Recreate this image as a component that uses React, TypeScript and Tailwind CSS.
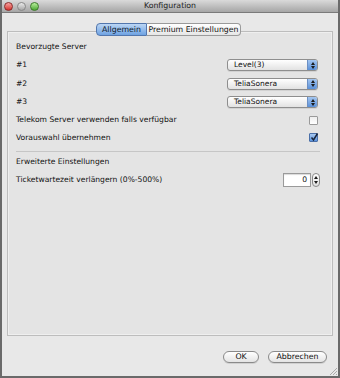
import React from 'react';

const font = { fontFamily: '"DejaVu Sans", "Liberation Sans", sans-serif' };

function Popup({ value }: { value: string }) {
  return (
    <div className="flex h-[12px] w-[91px] items-stretch overflow-hidden rounded-[3px] border border-[#8e8e8e] bg-gradient-to-b from-white to-[#e2e2e2] shadow-[0_1px_0_rgba(0,0,0,0.08)]">
      <div className="flex flex-1 items-center pl-[6px] text-[7.5px] leading-none text-[#111]">{value}</div>
      <div className="flex w-[10px] flex-col items-center justify-center gap-[1px] border-l border-[#6b8fc4] bg-gradient-to-b from-[#a4c6f0] to-[#5a90d8]">
        <svg width="4" height="3" viewBox="0 0 4 3"><path d="M0 3 L2 0 L4 3 Z" fill="#1b1b1b" /></svg>
        <svg width="4" height="3" viewBox="0 0 4 3"><path d="M0 0 L2 3 L4 0 Z" fill="#1b1b1b" /></svg>
      </div>
    </div>
  );
}

function Checkbox({ checked }: { checked?: boolean }) {
  if (checked) {
    return (
      <div className="relative h-[9px] w-[9px] rounded-[1px] border border-[#4a6fa8] bg-gradient-to-b from-[#a8c8f0] to-[#5a92dc]">
        <svg className="absolute left-[0px] top-[-2px]" width="9" height="10" viewBox="0 0 9 10">
          <path d="M1.5 5.5 L3.5 8 L7.5 1.5" stroke="#18243a" strokeWidth="1.5" fill="none" />
        </svg>
      </div>
    );
  }
  return <div className="h-[9px] w-[9px] rounded-[1px] border border-[#9a9a9a] bg-gradient-to-b from-[#eeeeee] to-white" />;
}

function Row({ h, children }: { h: string; children: React.ReactNode }) {
  return <div className={`flex items-center justify-between ${h}`}>{children}</div>;
}

export default function App() {
  return (
    <div
      style={font}
      className="flex h-[378px] w-[340px] flex-col overflow-hidden border-x-2 border-b-2 border-[#6a6a6a] bg-[#e8e8e8] text-[#111]"
    >
      {/* title bar */}
      <div className="relative flex h-[13px] shrink-0 items-center justify-center border-b border-[#7a7a7a] bg-gradient-to-b from-[#dadada] to-[#a6a6a6]">
        <div className="absolute left-[2px] top-[2px] flex gap-[4px]">
          <div className="h-[9px] w-[9px] rounded-full border border-[#8a2a2a] bg-gradient-to-b from-[#f7a0a0] to-[#d22a2a]" />
          <div className="h-[9px] w-[9px] rounded-full border border-[#888] bg-gradient-to-b from-[#eaeaea] to-[#a8a8a8]" />
          <div className="h-[9px] w-[9px] rounded-full border border-[#3c7a2a] bg-gradient-to-b from-[#b8f09c] to-[#4aa830]" />
        </div>
        <span className="text-[7.8px] leading-none text-[#222]">Konfiguration</span>
      </div>

      {/* tab box */}
      <div className="relative mx-[5px] mt-[18px] h-[305px] border border-[#bdbdbd] bg-[#e4e4e4] shadow-[inset_0_0_0_1px_#efefef]">
        <div className="absolute left-[88px] top-[-9px] flex h-[13px]">
          <div className="flex w-[51px] items-center justify-center rounded-l-[4px] border border-[#5276ad] bg-gradient-to-b from-[#bcd6f4] to-[#6ea2e2] text-[7.8px] leading-none text-[#0e1a2c]">
            Allgemein
          </div>
          <div className="flex w-[94px] items-center justify-center rounded-r-[4px] border border-l-0 border-[#9a9a9a] bg-gradient-to-b from-white to-[#e6e6e6] text-[7.8px] leading-none text-[#111]">
            Premium Einstellungen
          </div>
        </div>

        <div className="flex flex-col pl-[8px] pr-[14px] pt-[6px] text-[7.6px] leading-none">
          <Row h="h-[18px]"><span>Bevorzugte Server</span></Row>
          <Row h="h-[18px]"><span>#1</span><Popup value="Level(3)" /></Row>
          <Row h="h-[19px]"><span>#2</span><Popup value="TeliaSonera" /></Row>
          <Row h="h-[18px]"><span>#3</span><Popup value="TeliaSonera" /></Row>
          <Row h="h-[18px]">
            <span>Telekom Server verwenden falls verfügbar</span>
            <Checkbox />
          </Row>
          <Row h="h-[17px]">
            <span>Vorauswahl übernehmen</span>
            <Checkbox checked />
          </Row>
          <div className="mr-[-2px] mt-[5px] h-px bg-[#c6c6c6]" />
          <Row h="h-[20px]"><span>Erweiterte Einstellungen</span></Row>
          <Row h="h-[15px]">
            <span>Ticketwartezeit verlängern (0%-500%)</span>
            <div className="mr-[-2px] flex items-center gap-[1px]">
              <div className="flex h-[14px] w-[28px] items-center justify-end border border-[#9a9a9a] bg-white pr-[3px] shadow-[inset_0_1px_1px_rgba(0,0,0,0.15)]">
                0
              </div>
              <div className="flex h-[14px] w-[8px] flex-col items-center justify-center gap-[2px] rounded-[4px] border border-[#8a8a8a] bg-gradient-to-b from-white to-[#e0e0e0]">
                <svg width="4" height="3" viewBox="0 0 4 3"><path d="M0 3 L2 0 L4 3 Z" fill="#1b1b1b" /></svg>
                <svg width="4" height="3" viewBox="0 0 4 3"><path d="M0 0 L2 3 L4 0 Z" fill="#1b1b1b" /></svg>
              </div>
            </div>
          </Row>
        </div>
      </div>

      {/* buttons */}
      <div className="relative flex flex-1 items-start justify-end gap-[9px] pr-[11px] pt-[15px]">
        <button className="flex h-[12px] w-[36px] items-center justify-center rounded-full border border-[#8a8a8a] bg-gradient-to-b from-white to-[#e4e4e4] text-[7.8px] leading-none text-[#111] shadow-[0_1px_0_rgba(0,0,0,0.1)]">
          OK
        </button>
        <button className="flex h-[12px] w-[59px] items-center justify-center rounded-full border border-[#8a8a8a] bg-gradient-to-b from-white to-[#e4e4e4] text-[7.8px] leading-none text-[#111] shadow-[0_1px_0_rgba(0,0,0,0.1)]">
          Abbrechen
        </button>
        <svg className="absolute bottom-[1px] right-[1px]" width="8" height="8" viewBox="0 0 8 8">
          <path d="M8 1 L1 8 M8 4 L4 8 M8 7 L7 8" stroke="#9a9a9a" strokeWidth="0.8" />
        </svg>
      </div>
    </div>
  );
}
